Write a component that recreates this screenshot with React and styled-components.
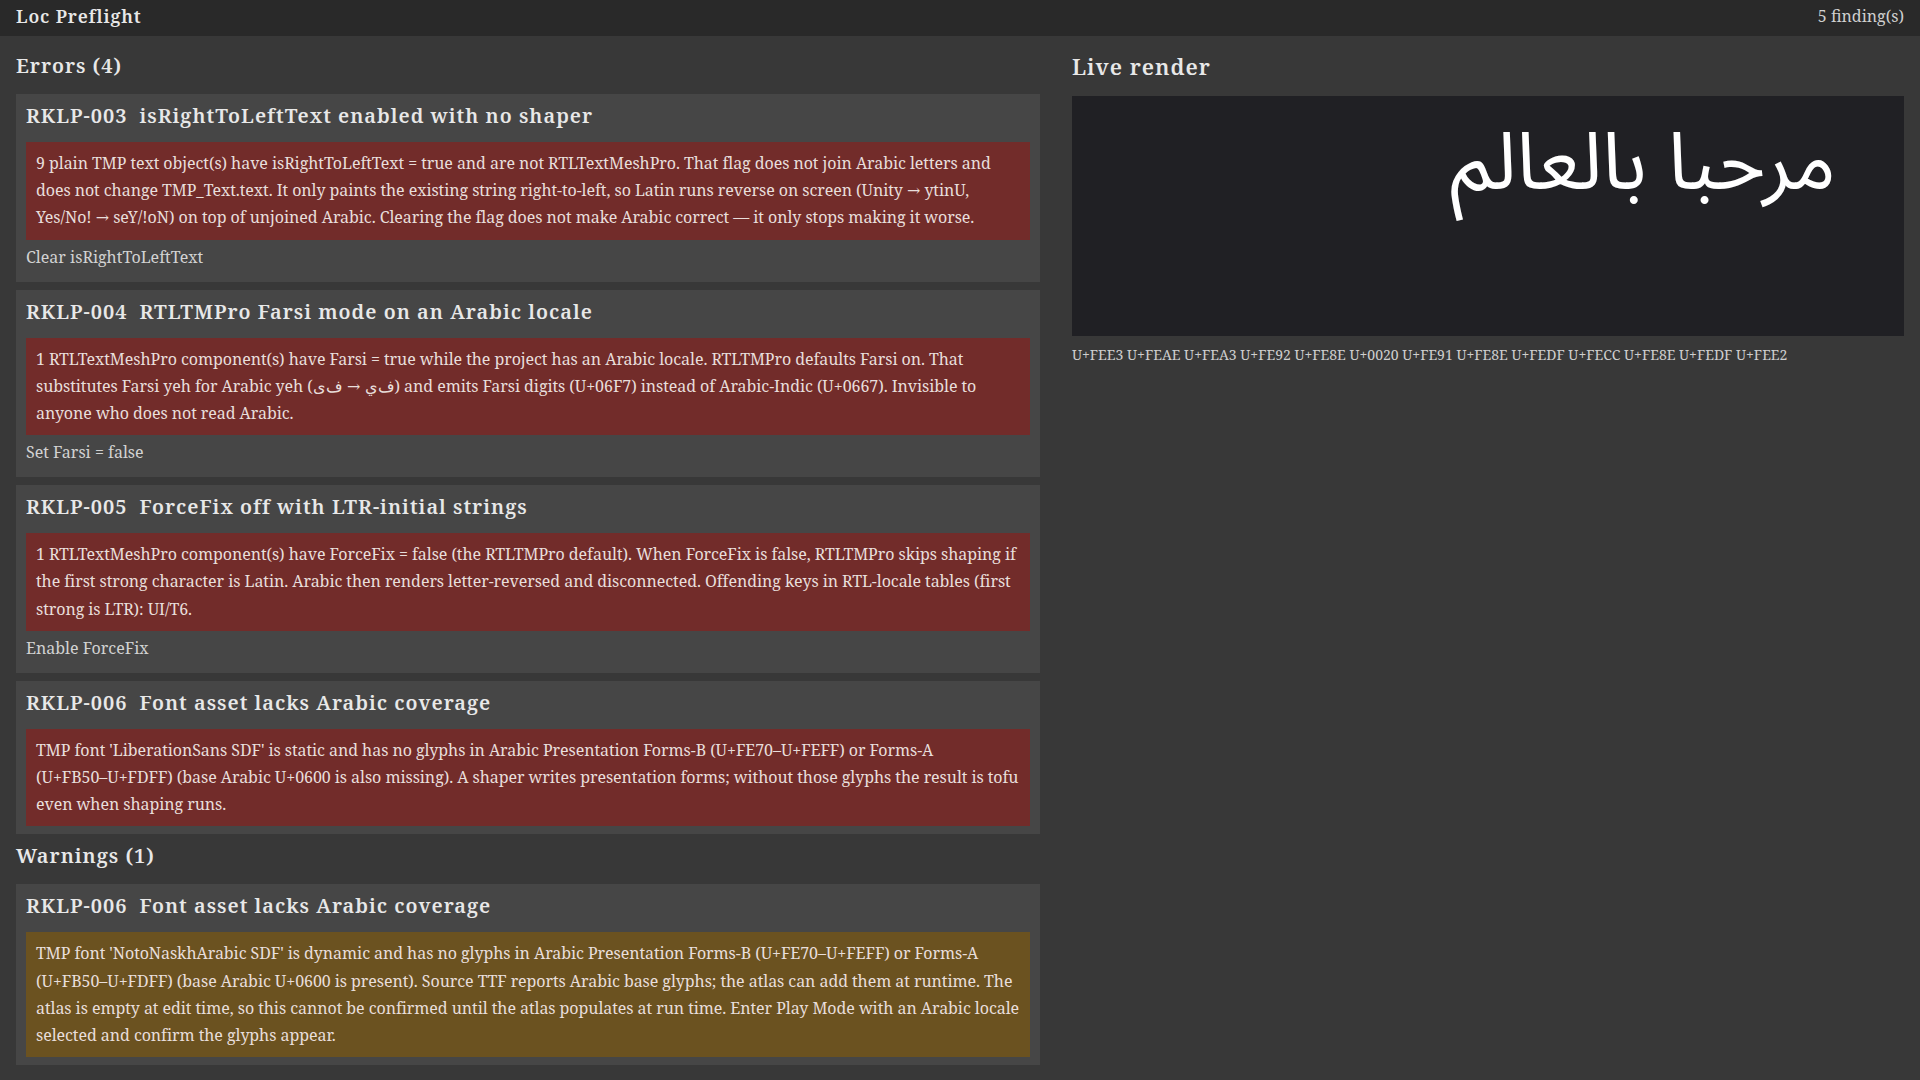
import React from 'react';
import styled, { createGlobalStyle } from 'styled-components';

const GlobalStyle = createGlobalStyle`
    html, body {
        margin: 0;
        padding: 0;
        background: #383838;
    }
    body {
        font-family: "Noto Serif", "DejaVu Serif", "Liberation Serif", serif;
        color: #e4e4e4;
    }
`

// U+2060 after the en dash keeps code point ranges on one line
const findings = [
    {
        level: 'error',
        code: 'RKLP-003',
        title: 'isRightToLeftText enabled with no shaper',
        body: '9 plain TMP text object(s) have isRightToLeftText = true and are not RTLTextMeshPro. That flag does not join Arabic letters and does not change TMP_Text.text. It only paints the existing string right-to-left, so Latin runs reverse on screen (Unity \u2192 ytinU, Yes/No! \u2192 seY/!oN) on top of unjoined Arabic. Clearing the flag does not make Arabic correct \u2014 it only stops making it worse.',
        action: 'Clear isRightToLeftText',
    },
    {
        level: 'error',
        code: 'RKLP-004',
        title: 'RTLTMPro Farsi mode on an Arabic locale',
        body: '1 RTLTextMeshPro component(s) have Farsi = true while the project has an Arabic locale. RTLTMPro defaults Farsi on. That substitutes Farsi yeh for Arabic yeh (\uFED1\uFEF1 \u2192 \uFED1\uFBFC) and emits Farsi digits (U+06F7) instead of Arabic-Indic (U+0667). Invisible to anyone who does not read Arabic.',
        action: 'Set Farsi = false',
    },
    {
        level: 'error',
        code: 'RKLP-005',
        title: 'ForceFix off with LTR-initial strings',
        body: '1 RTLTextMeshPro component(s) have ForceFix = false (the RTLTMPro default). When ForceFix is false, RTLTMPro skips shaping if the first strong character is Latin. Arabic then renders letter-reversed and disconnected. Offending keys in RTL-locale tables (first strong is LTR): UI/T6.',
        action: 'Enable ForceFix',
    },
    {
        level: 'error',
        code: 'RKLP-006',
        title: 'Font asset lacks Arabic coverage',
        body: "TMP font 'LiberationSans SDF' is static and has no glyphs in Arabic Presentation Forms-B (U+FE70\u2013\u2060U+FEFF) or Forms-A (U+FB50\u2013\u2060U+FDFF) (base Arabic U+0600 is also missing). A shaper writes presentation forms; without those glyphs the result is tofu even when shaping runs.",
    },
    {
        level: 'warning',
        code: 'RKLP-006',
        title: 'Font asset lacks Arabic coverage',
        body: "TMP font 'NotoNaskhArabic SDF' is dynamic and has no glyphs in Arabic Presentation Forms-B (U+FE70\u2013\u2060U+FEFF) or Forms-A (U+FB50\u2013\u2060U+FDFF) (base Arabic U+0600 is present). Source TTF reports Arabic base glyphs; the atlas can add them at runtime. The atlas is empty at edit time, so this cannot be confirmed until the atlas populates at run time. Enter Play Mode with an Arabic locale selected and confirm the glyphs appear.",
    },
]

const codepoints = 'U+FEE3 U+FEAE U+FEA3 U+FE92 U+FE8E U+0020 U+FE91 U+FE8E U+FEDF U+FECC U+FE8E U+FEDF U+FEE2'

const FindingCard = ({ finding }) => (
    <Card>
        <CardTitle>
            {finding.code}
            <Gap />
            {finding.title}
        </CardTitle>
        <Message level={finding.level}>{finding.body}</Message>
        {finding.action && <Action>{finding.action}</Action>}
    </Card>
)

const App = () => {
    const errors = findings.filter(f => f.level === 'error')
    const warnings = findings.filter(f => f.level === 'warning')
    return (
        <>
            <GlobalStyle />
            <TopBar>
                <AppTitle>Loc Preflight</AppTitle>
                <Count>{findings.length} finding(s)</Count>
            </TopBar>
            <Main>
                <FindingList>
                    <SectionTitle>Errors ({errors.length})</SectionTitle>
                    {errors.map((f, i) => <FindingCard key={'e' + i} finding={f} />)}
                    <SectionTitle>Warnings ({warnings.length})</SectionTitle>
                    {warnings.map((f, i) => <FindingCard key={'w' + i} finding={f} />)}
                </FindingList>
                <RenderColumn>
                    <SectionTitle large>Live render</SectionTitle>
                    <RenderView>
                        <ArabicSample dir="rtl" lang="ar">مرحبا بالعالم</ArabicSample>
                    </RenderView>
                    <Codepoints>{codepoints}</Codepoints>
                </RenderColumn>
            </Main>
        </>
    )
}

export default App;

const TopBar = styled.header`
    display: flex;
    align-items: center;
    justify-content: space-between;
    height: 36px;
    padding: 0 16px 5px;
    box-sizing: border-box;
    background: #292929;
`
const AppTitle = styled.div`
    font-size: 18px;
    font-weight: 600;
    letter-spacing: 0.85px;
    color: #e8e8e8;
`
const Count = styled.div`
    font-size: 16px;
    color: #d0d0d0;
`
const Main = styled.main`
    display: grid;
    grid-template-columns: minmax(0, 1024fr) minmax(0, 832fr);
    column-gap: 32px;
    padding: 16px 16px 0;
    align-items: start;
`
const FindingList = styled.section`
    display: flex;
    flex-direction: column;
    gap: 8px;
`
const SectionTitle = styled.h2`
    margin: 0 0 6px;
    font-size: ${p => p.large ? '22px' : '20px'};
    line-height: 28px;
    font-weight: 600;
    letter-spacing: 1px;
    color: #e8e8e8;
`
const Card = styled.article`
    background: #464646;
    padding: 8px 10px;
`
const CardTitle = styled.h3`
    margin: 0 0 12px;
    font-size: 20px;
    line-height: 28px;
    font-weight: 600;
    letter-spacing: 1px;
    color: #e8e8e8;
`
const Gap = styled.span`
    display: inline-block;
    width: 12px;
`
const Message = styled.p`
    margin: 0;
    padding: 8px 8px 8px 10px;
    font-size: 16px;
    line-height: 27.2px;
    letter-spacing: -0.06px;
    color: #e8dedb;
    background: ${p => p.level === 'warning' ? '#6b5220' : '#722c2a'};
`
const Action = styled.div`
    margin-top: 4px;
    padding-bottom: 3px;
    font-size: 16px;
    line-height: 27px;
    color: #d2d2d2;
`
const RenderColumn = styled.section`
    display: flex;
    flex-direction: column;
`
const RenderView = styled.div`
    height: 240px;
    margin-top: 10px;
    background: #202024;
    display: flex;
    justify-content: flex-end;
    align-items: flex-start;
    padding: 12px 68px 0 0;
    box-sizing: border-box;
`
const ArabicSample = styled.div`
    font-family: "Noto Sans Arabic", "DejaVu Sans", sans-serif;
    font-size: 80px;
    line-height: 1.4;
    color: #ffffff;
`
const Codepoints = styled.div`
    margin-top: 9px;
    font-size: 14px;
    line-height: 20px;
    color: #cfcfcf;
`
